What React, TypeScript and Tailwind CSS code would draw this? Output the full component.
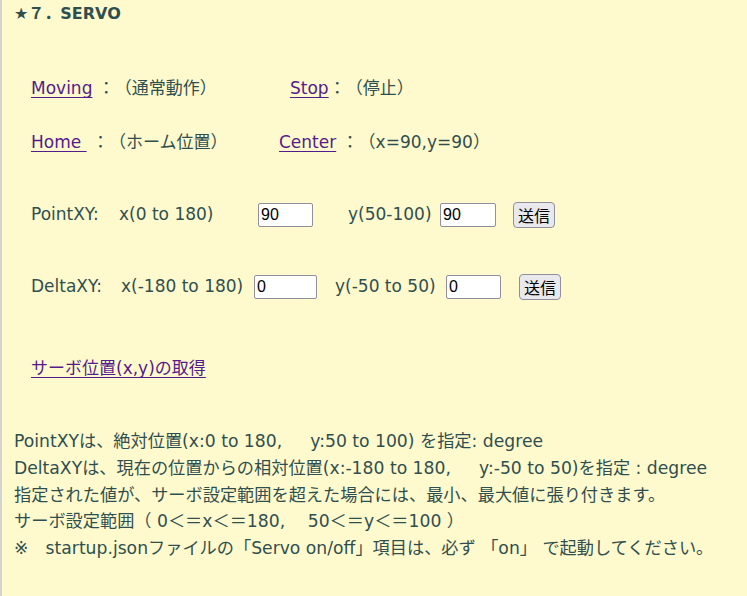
import React, { useState } from 'react';

const upperFont = { fontFamily: '"DejaVu Sans", "Noto Sans CJK JP", sans-serif' };

const App: React.FC = () => {
  const [px, setPx] = useState<string>('90');
  const [py, setPy] = useState<string>('90');
  const [dx, setDx] = useState<string>('0');
  const [dy, setDy] = useState<string>('0');

  const linkCls = 'text-[#551a8b] underline underline-offset-[3px] decoration-1';
  const inputCls =
    'h-[24px] bg-white border border-[#8f8f9d] rounded-[2px] px-[2px] text-[16px] text-black outline-none font-["Liberation_Sans",sans-serif]';
  const btnCls =
    'h-[26px] w-[42px] bg-[#e9e9ed] border border-[#8f8f9d] rounded-[4px] text-[16px] text-black font-["Noto_Sans_CJK_JP",sans-serif] leading-none';

  return (
    <div className="min-h-[596px] w-[747px] bg-[#fffacd] border-l-[2px] border-[#d3d3d3] text-[#2f4f4f] text-[17px] [text-spacing-trim:space-all]">
      <div className="h-[28px] flex items-center pl-[12px] text-[16px] font-bold" style={upperFont}>
        ★７．SERVO
      </div>

      <div className="flex flex-col pl-[29px]" style={upperFont}>
        <div className="mt-[48px] h-[26px] flex items-center">
          <span className="w-[259px] whitespace-pre">
            <a href="#" className={linkCls}>Moving</a> ：（通常動作）
          </span>
          <span className="whitespace-pre">
            <a href="#" className={linkCls}>Stop</a>：（停止）
          </span>
        </div>

        <div className="mt-[28px] h-[26px] flex items-center">
          <span className="w-[248px] whitespace-pre">
            <a href="#" className={linkCls}>Home </a> ：（ホーム位置）
          </span>
          <span className="whitespace-pre">
            <a href="#" className={linkCls}>Center</a> ：（x=90,y=90）
          </span>
        </div>

        <div className="mt-[44px] h-[30px] flex items-center">
          <span className="w-[88px]">PointXY:</span>
          <span className="w-[139px]">x(0 to 180)</span>
          <input className={`${inputCls} w-[55px]`} value={px} onChange={(e) => setPx(e.target.value)} />
          <span className="ml-[35px] w-[92px]">y(50-100)</span>
          <input className={`${inputCls} w-[56px]`} value={py} onChange={(e) => setPy(e.target.value)} />
          <button className={`${btnCls} ml-[17px]`}>送信</button>
        </div>

        <div className="mt-[42px] h-[30px] flex items-center">
          <span className="w-[90px]">DeltaXY:</span>
          <span className="w-[133px]">x(-180 to 180)</span>
          <input className={`${inputCls} w-[63px]`} value={dx} onChange={(e) => setDx(e.target.value)} />
          <span className="ml-[18px] w-[111px]">y(-50 to 50)</span>
          <input className={`${inputCls} w-[55px]`} value={dy} onChange={(e) => setDy(e.target.value)} />
          <button className={`${btnCls} ml-[18px]`}>送信</button>
        </div>

        <div className="mt-[54px] h-[26px] flex items-center">
          <a href="#" className={linkCls}>サーボ位置(x,y)の取得</a>
        </div>
      </div>

      <div className="mt-[46px] pl-[12px] leading-[26.8px] text-[17.2px] whitespace-pre" style={upperFont}>
        <div>PointXYは、絶対位置(x:0 to 180,　  y:50 to 100) を指定: degree</div>
        <div>DeltaXYは、現在の位置からの相対位置(x:-180 to 180,　  y:-50 to 50)を指定 : degree</div>
        <div>指定された値が、サーボ設定範囲を超えた場合には、最小、最大値に張り付きます。</div>
        <div>サーボ設定範囲（ 0＜＝x＜＝180,　 50＜＝y＜＝100 ）</div>
        <div>※　startup.jsonファイルの「Servo on/off」項目は、必ず 「on」 で起動してください。</div>
      </div>
    </div>
  );
};

export default App;
